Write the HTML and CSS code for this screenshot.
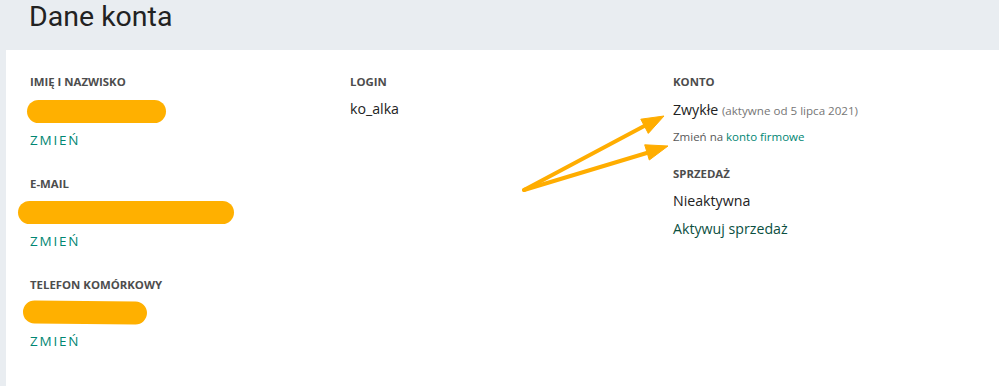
FILE: index.html
```html
<!DOCTYPE html>
<html lang="pl">
<head>
    <meta charset="UTF-8">
    <title>Dane konta</title>
    <link rel="stylesheet" href="styles.css">
</head>
<body>
    <div class="header">
        <h1 class="page-title">Dane konta</h1>
    </div>

    <div class="card">
        <div class="col">
            <div class="field">
                <div class="label">IMIĘ I NAZWISKO</div>
                <div class="blot blot-name"></div>
                <a href="#" class="change">ZMIEŃ</a>
            </div>
            <div class="field">
                <div class="label">E-MAIL</div>
                <div class="blot blot-mail"></div>
                <a href="#" class="change">ZMIEŃ</a>
            </div>
            <div class="field">
                <div class="label">TELEFON KOMÓRKOWY</div>
                <div class="blot blot-phone"></div>
                <a href="#" class="change">ZMIEŃ</a>
            </div>
        </div>

        <div class="col">
            <div class="label">LOGIN</div>
            <div class="value">ko_alka</div>
        </div>

        <div class="col">
            <div class="label">KONTO</div>
            <div class="value value-first">Zwykłe <span class="muted">(aktywne od 5 lipca 2021)</span></div>
            <div class="small">Zmień na <a href="#" class="link">konto firmowe</a></div>
            <div class="label label-gap">SPRZEDAŻ</div>
            <div class="value">Nieaktywna</div>
            <a href="#" class="activate">Aktywuj sprzedaż</a>
        </div>

        <!-- adnotacja: strzałki -->
        <svg class="arrows" width="999" height="386" viewBox="0 0 999 386">
            <g stroke="#ffad00" stroke-width="4" stroke-linecap="round" fill="none">
                <line x1="524" y1="190" x2="648" y2="124"/>
                <line x1="524" y1="190" x2="650" y2="152"/>
            </g>
            <g fill="#ffad00" stroke="#ffad00" stroke-width="1" stroke-linejoin="round">
                <polygon points="664,116 648.3,133.4 640.8,119.2"/>
                <polygon points="668,146 649.3,160 644.7,144.8"/>
            </g>
        </svg>
    </div>
</body>
</html>
```

FILE: styles.css
```css
body {
    margin: 0;
    background-color: #e9edf1;
    font-family: 'Open Sans', 'Liberation Sans', sans-serif;
    color: #222;
    height: 386px;
    overflow: hidden;
}
.header {
    height: 50px;
    padding: 2px 0 0 29px;
    box-sizing: border-box;
}
.page-title {
    font-family: Roboto, 'Open Sans', sans-serif;
    font-weight: 400;
    font-size: 28.5px;
    color: #222;
    margin: 0;
    line-height: 30px;
}
.card {
    position: relative;
    background: white;
    margin-left: 6px;
    height: 336px;
    display: grid;
    grid-template-columns: 320px 323px 1fr;
    padding: 24px 0 0 24px;
    box-sizing: border-box;
}
.field {
    height: 101.5px;
}
.label {
    font-size: 11.4px;
    font-weight: 700;
    color: #4d4d4d;
    line-height: 16px;
    height: 16px;
}
.label-gap {
    margin-top: 20px;
}
.blot {
    background: #ffb000;
    border-radius: 12px;
    height: 23px;
}
.blot-name {
    width: 139px;
    margin: 10px 0 0 -3px;
}
.blot-mail {
    width: 216px;
    margin: 9px 0 0 -12px;
}
.blot-phone {
    width: 124px;
    margin: 8px 0 0 -7px;
    transform: rotate(0.5deg);
}
.change {
    display: block;
    margin-top: 8px;
    font-size: 13.5px;
    letter-spacing: 1.8px;
    color: #008673;
    text-decoration: none;
    line-height: 18px;
}
.value {
    margin-top: 9px;
    font-size: 14.2px;
    line-height: 20px;
    color: #222;
}
.value-first {
    margin-top: 10px;
}
.muted {
    font-size: 11.6px;
    color: #767676;
}
.small {
    margin-top: 7px;
    font-size: 11.5px;
    line-height: 18px;
    color: #595959;
}
.link {
    color: #008673;
    text-decoration: none;
}
.activate {
    display: block;
    margin-top: 8px;
    font-size: 14.2px;
    line-height: 20px;
    color: #0b4f3f;
    text-decoration: none;
}
.arrows {
    position: absolute;
    left: -6px;
    top: -50px;
    pointer-events: none;
}
```
